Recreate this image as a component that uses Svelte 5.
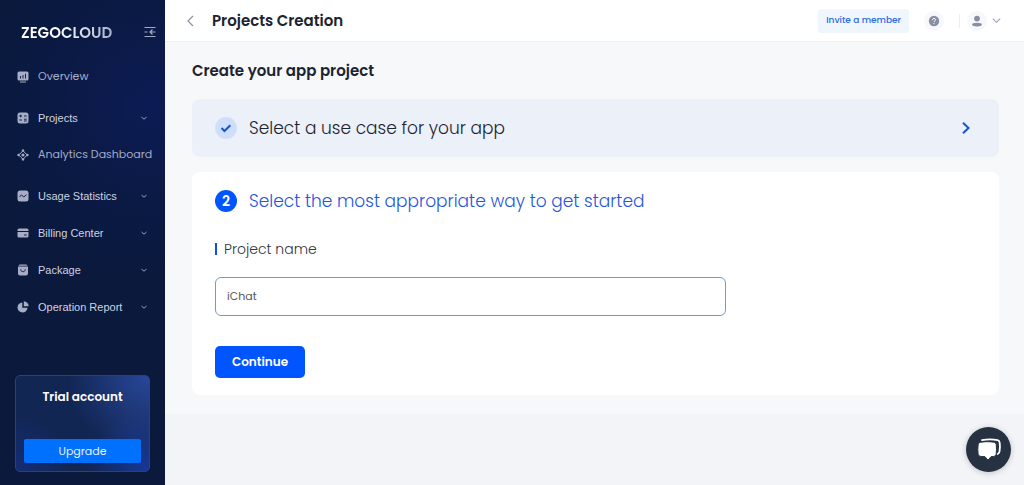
<script>
  let projectName = $state('iChat');

  const menu = [
    { label: 'Overview', icon: 'overview', link: true },
    { label: 'Projects', icon: 'projects' },
    { label: 'Analytics Dashboard', icon: 'analytics', link: true },
    { label: 'Usage Statistics', icon: 'usage' },
    { label: 'Billing Center', icon: 'billing' },
    { label: 'Package', icon: 'package' },
    { label: 'Operation Report', icon: 'report' }
  ];
</script>

{#snippet menuIcon(name)}
  <svg class="icon" viewBox="0 0 12 12" aria-hidden="true">
    {#if name === 'overview'}
      <path fill="currentColor" d="M2 .5h8A1.500 1.500 0 0 1 11.500 2v6A1.500 1.500 0 0 1 10 9.500H2A1.500 1.500 0 0 1 .5 8V2A1.500 1.500 0 0 1 2 .5zM3 10.500h6v1H3z" />
      <path class="cut" d="M3.500 5v2.500M6 4v3.500M8.500 2.800v4.700" />
    {:else if name === 'projects'}
      <rect x=".5" y=".5" width="11" height="11" rx="2.500" fill="currentColor" />
      <path class="cut" d="M2.300 4h2.700M7 4h2.700M3.650 2.700v2.600M2.300 8h2.700M7 7.200h2.700M7 9h2.700" />
    {:else if name === 'analytics'}
      <path fill="none" stroke="currentColor" stroke-width="1" d="M6 1.800L10.200 6 6 10.200 1.800 6z" />
      <circle cx="6" cy="6" r="1.600" fill="currentColor" />
      <path fill="currentColor" d="M6-.2l1.700 2.500H4.300zM6 12.200l1.700-2.500H4.300zM-.2 6l2.500-1.700v3.400zM12.200 6L9.700 4.300v3.400z" />
    {:else if name === 'usage'}
      <rect x=".5" y=".5" width="11" height="11" rx="2.500" fill="currentColor" />
      <path class="cut" d="M2.500 7l2-2.200 2.200 2.300 2.800-2.500" />
    {:else if name === 'billing'}
      <path fill="currentColor" d="M2 1.500h8A1.500 1.500 0 0 1 11.500 3v1H.5V3A1.500 1.500 0 0 1 2 1.500zM.5 5h11v4a1.500 1.500 0 0 1-1.500 1.500H2A1.500 1.500 0 0 1 .5 9z" />
      <path class="cut" d="M7 8h2.700" />
    {:else if name === 'package'}
      <path fill="currentColor" d="M2.500.5h7l1 1.200h-9zM1 2.500h10v7a2 2 0 0 1-2 2H3a2 2 0 0 1-2-2z" />
      <path class="cut" d="M3.800 5.200v.6c0 2.500 4.400 2.500 4.400 0v-.6" />
    {:else}
      <path fill="currentColor" d="M5.300 1.500v5.200h5.200a5 5 0 1 1-5.200-5.200z" />
      <path fill="currentColor" d="M6.800.3a5 5 0 0 1 4.900 4.900H6.800z" />
    {/if}
  </svg>
{/snippet}

<div class="app">
  <aside>
    <div class="brand">
      <span class="logo">ZEGOCLOUD</span>
      <button class="collapse" aria-label="Collapse menu">
        <svg viewBox="0 0 12 12" aria-hidden="true">
          <path d="M.5 1.500h11M.5 10.500h11M.5 6h3M6 6h5.500M8.500 3.500L6 6l2.500 2.500" fill="none" stroke="currentColor" stroke-width="1.200" />
        </svg>
      </button>
    </div>

    <nav>
      {#each menu as item}
        {#if item.link}
          <a class="item" href="#{item.icon}">
            {@render menuIcon(item.icon)}
            <span>{item.label}</span>
          </a>
        {:else}
          <button class="item group">
            {@render menuIcon(item.icon)}
            <span>{item.label}</span>
            <svg class="caret" viewBox="0 0 8 8" aria-hidden="true"><path d="M1.500 3L4 5.200 6.500 3" /></svg>
          </button>
        {/if}
      {/each}
    </nav>

    <section class="trial">
      <h2>Trial account</h2>
      <button>Upgrade</button>
    </section>
  </aside>

  <div class="page">
    <header>
      <button class="back" aria-label="Back">
        <svg viewBox="0 0 12 12" aria-hidden="true"><path d="M8 1L3 6l5 5" /></svg>
      </button>
      <h1>Projects Creation</h1>
      <button class="invite">Invite a member</button>
      <button class="round" aria-label="Help">
        <svg viewBox="0 0 12 12" aria-hidden="true">
          <circle cx="6" cy="6" r="5.200" fill="currentColor" />
          <path d="M4.500 4.900c0-2 3-1.900 3-.1 0 1.200-1.500 1-1.500 2.200M6 8.100v1" fill="none" stroke="#fff" stroke-width="1" />
        </svg>
      </button>
      <span class="divider"></span>
      <button class="account" aria-label="Account">
        <span class="round">
          <svg viewBox="0 0 12 12" aria-hidden="true">
            <circle cx="6" cy="3.600" r="2.900" fill="currentColor" />
            <ellipse cx="6" cy="9.600" rx="4.900" ry="1.900" fill="currentColor" />
          </svg>
        </span>
        <svg class="down" viewBox="0 0 8 8" aria-hidden="true"><path d="M.7 2.300L4 5.600l3.300-3.300" /></svg>
      </button>
    </header>

    <main>
      <h2>Create your app project</h2>

      <button class="step done">
        <span class="badge">
          <svg viewBox="0 0 12 12" aria-hidden="true"><path d="M1.500 6l3 3 5.800-5.800" /></svg>
        </span>
        <span class="step-title">Select a use case for your app</span>
        <svg class="next" viewBox="0 0 12 12" aria-hidden="true"><path d="M3 .8L8.500 6 3 11.200" /></svg>
      </button>

      <section class="step current">
        <div class="step-head">
          <span class="badge">2</span>
          <h3 class="step-title">Select the most appropriate way to get started</h3>
        </div>
        <label for="project-name">Project name</label>
        <input id="project-name" type="text" bind:value={projectName} />
        <button class="continue">Continue</button>
      </section>
    </main>
  </div>

  <button class="chat" aria-label="Open chat">
    <svg viewBox="0 0 24 24" aria-hidden="true">
      <path d="M5 2.200c5-.9 11-.9 15.500 0 1.300.3 2 1.200 2.200 2.500.4 3 .3 6-.2 9-.2 1.200-.8 1.900-1.900 2.300" fill="none" stroke="#fff" stroke-width="1.800" stroke-linecap="round" />
      <path d="M3.800 4.200c4.300-.7 9-.7 13 0 1.500.3 2.400 1.200 2.500 2.700.3 3 .2 6-.1 8.800-.2 1.600-1 2.500-2.600 2.700l-2.600.3-3 3.500-3-3.500-4.200-.3c-1.600-.2-2.500-1.100-2.700-2.700-.4-3-.4-5.800 0-8.800.2-1.600 1.100-2.500 2.700-2.700z" fill="#fff" />
    </svg>
  </button>
</div>

<style>
  :global(body) {
    margin: 0;
  }

  .app {
    display: flex;
    min-height: 100vh;
    font-family: Poppins, Inter, sans-serif;
    color: #1d2330;
    background: #f3f4f8;
  }

  button {
    margin: 0;
    padding: 0;
    border: 0;
    background: none;
    color: inherit;
    font: inherit;
    cursor: pointer;
  }

  h1,
  h2,
  h3 {
    margin: 0;
  }

  svg {
    display: block;
    flex: none;
    overflow: visible;
  }

  aside {
    box-sizing: border-box;
    display: flex;
    flex-direction: column;
    flex: none;
    width: 165px;
    padding: 20px 15px 13px;
    background: radial-gradient(circle at 92% 22%, #0c1b54 0, #0b1a46 20%, #0a193c 44%);
  }

  .brand {
    display: flex;
    align-items: center;
    justify-content: space-between;
    height: 24px;
    margin-right: -6px;
    padding-left: 6px;
  }

  .logo {
    font-size: 15px;
    font-weight: 600;
    background: linear-gradient(90deg, #fff 40%, #a9b2cc);
    background-clip: text;
    color: transparent;
  }

  .collapse {
    color: #a3abc4;
  }

  .collapse svg {
    width: 12px;
    height: 12px;
  }

  nav {
    display: flex;
    flex-direction: column;
    margin-top: 14px;
  }

  .item {
    display: flex;
    align-items: center;
    gap: 9px;
    height: 37px;
    padding: 0 2px;
    color: #a3adc8;
    font-size: 11px;
    text-align: left;
    text-decoration: none;
    white-space: nowrap;
  }

  a.item {
    margin-bottom: 4px;
  }

  .group {
    color: #cdd3e0;
    font-family: "Liberation Sans", Arial, sans-serif;
  }

  .icon {
    width: 12px;
    height: 12px;
    color: #a6adc4;
  }

  .cut {
    fill: none;
    stroke: #14224c;
    stroke-width: 1;
  }

  .caret {
    width: 8px;
    height: 8px;
    margin-left: auto;
  }

  .caret path,
  .down path {
    fill: none;
    stroke: #98a1bb;
    stroke-width: 1;
  }

  .trial {
    box-sizing: border-box;
    display: flex;
    flex-direction: column;
    justify-content: space-between;
    min-height: 97px;
    margin-top: auto;
    padding: 12px 8px 8px;
    border: 1px solid #29427e;
    border-radius: 5px;
    background:
      radial-gradient(circle at 100% 0, #284799 0, transparent 50%),
      radial-gradient(circle at 100% 100%, #17389a 0, transparent 38%),
      radial-gradient(circle at 0 100%, #142d76 0, transparent 35%),
      #122653;
  }

  .trial h2 {
    color: #fff;
    font-size: 12px;
    font-weight: 600;
    line-height: 18px;
    text-align: center;
  }

  .trial button {
    height: 24px;
    border-radius: 2px;
    background: #0070ff;
    color: #e8f2ff;
    font-size: 11px;
  }

  .page {
    flex: 1;
    min-width: 0;
  }

  header {
    box-sizing: border-box;
    display: flex;
    align-items: center;
    height: 42px;
    padding: 0 23px 0 20px;
    border-bottom: 1px solid #eceef3;
    background: #fff;
  }

  .back svg {
    width: 12px;
    height: 12px;
  }

  .back path {
    fill: none;
    stroke: #8e939f;
    stroke-width: 1.2;
  }

  h1 {
    margin-left: 15px;
    font-size: 15px;
    font-weight: 600;
  }

  .invite {
    height: 24px;
    margin-left: auto;
    padding: 0 8px;
    border-radius: 3px;
    background: #eff6fe;
    color: #2b6be0;
    font-size: 9px;
    font-weight: 500;
  }

  .round {
    display: grid;
    place-items: center;
    width: 20px;
    height: 20px;
    border-radius: 50%;
    background: #f7f8fb;
    color: #8a8ea3;
  }

  .round svg {
    width: 12px;
    height: 12px;
  }

  .invite + .round {
    margin-left: 15px;
  }

  .divider {
    width: 1px;
    height: 14px;
    margin: 0 7px 0 15px;
    background: #eceef3;
  }

  .account {
    display: flex;
    align-items: center;
    gap: 5px;
  }

  .down {
    width: 9px;
    height: 9px;
  }

  main {
    display: flex;
    flex-direction: column;
    padding: 17px 25px 19px 27px;
    background: #f6f8fa;
  }

  main > h2 {
    font-size: 15px;
    font-weight: 600;
    line-height: 24px;
  }

  .step {
    border-radius: 8px;
  }

  .done {
    display: flex;
    align-items: center;
    height: 58px;
    margin: 16px 0 15px;
    padding: 0 27px 0 23px;
    background: #ebf0f9;
    text-align: left;
  }

  .badge {
    display: grid;
    place-items: center;
    flex: none;
    width: 22px;
    height: 22px;
    margin-right: 12px;
    border-radius: 50%;
    background: #0055ff;
    color: #fff;
    font-size: 14px;
    font-weight: 600;
  }

  .done .badge {
    background: #cfdffb;
  }

  .badge svg {
    width: 12px;
    height: 12px;
  }

  .badge path,
  .next path {
    fill: none;
    stroke: #1454d6;
    stroke-width: 2;
  }

  .step-title {
    font-size: 17px;
    font-weight: 300;
    line-height: 24px;
  }

  .next {
    width: 12px;
    height: 12px;
    margin-left: auto;
  }

  .current {
    display: flex;
    flex-direction: column;
    align-items: flex-start;
    padding: 17px 23px;
    background: #fff;
  }

  .step-head {
    display: flex;
    align-items: center;
    color: #1f56dc;
  }

  label {
    display: flex;
    align-items: center;
    gap: 7px;
    margin-top: 26px;
    color: #30353f;
    font-size: 14px;
    font-weight: 300;
    line-height: 20px;
  }

  label::before {
    content: "";
    width: 2px;
    height: 12px;
    background: #0d4fe0;
  }

  input {
    box-sizing: border-box;
    width: 100%;
    max-width: 511px;
    height: 39px;
    margin: 18px 0 30px;
    padding: 0 11px;
    border: 1px solid #6f9cc9;
    border-radius: 6px;
    outline: 0;
    background: #fff;
    color: #555;
    font: inherit;
    font-size: 11px;
  }

  .continue {
    height: 32px;
    padding: 0 17px;
    border-radius: 5px;
    background: #0055ff;
    color: #fff;
    font-size: 12px;
    font-weight: 600;
  }

  .chat {
    position: fixed;
    right: 13px;
    bottom: 13px;
    display: grid;
    place-items: center;
    width: 45px;
    height: 45px;
    border-radius: 50%;
    background: #263241;
    box-shadow: 0 1px 6px #0003;
  }

  .chat svg {
    width: 24px;
    height: 24px;
  }

  .chat path + path {
    stroke: #263241;
    stroke-width: 1;
  }
</style>
